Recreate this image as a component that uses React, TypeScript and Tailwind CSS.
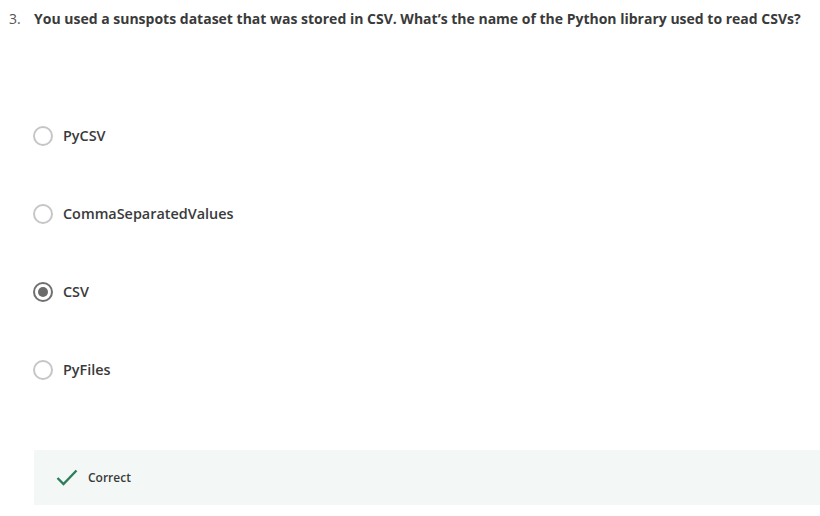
const options = [
  { label: 'PyCSV', checked: false },
  { label: 'CommaSeparatedValues', checked: false },
  { label: 'CSV', checked: true },
  { label: 'PyFiles', checked: false },
];

function Radio({ checked }: { checked: boolean }) {
  return checked ? (
    <span className="flex h-[20px] w-[20px] shrink-0 items-center justify-center rounded-full border-2 border-[#707070]">
      <span className="h-[10px] w-[10px] rounded-full bg-[#6b6b6b]" />
    </span>
  ) : (
    <span className="h-[20px] w-[20px] shrink-0 rounded-full border-2 border-[#c6c6c6]" />
  );
}

export default function App() {
  return (
    <div className="h-[516px] w-[820px] bg-white font-['Open_Sans',sans-serif] text-[#333]">
      <div className="flex pt-[9px]">
        <span className="w-[34px] pl-[9px] text-[14px] leading-[19px] text-[#555]">3.</span>
        <h2 className="text-[14px] font-bold leading-[19px] text-[#3a3a3a]">
          You used a sunspots dataset that was stored in CSV. What’s the name of the Python library used to read CSVs?
        </h2>
      </div>

      <ul className="mt-[98px] flex flex-col gap-[58px] pl-[33px]">
        {options.map((o) => (
          <li key={o.label} className="flex h-[20px] items-center gap-[10px]">
            <Radio checked={o.checked} />
            <span className="text-[14.4px] font-semibold leading-[20px] text-[#3a3a3a]">{o.label}</span>
          </li>
        ))}
      </ul>

      <div className="ml-[34px] mt-[70px] flex h-[55px] items-center bg-[#f3f8f6] pl-[22px]">
        <svg width="22" height="17" viewBox="0 0 22 17" fill="none">
          <path d="M1.5 9 L7.5 15 L20.5 1.5" stroke="#2f7d5a" strokeWidth="2.4" />
        </svg>
        <span className="ml-[10px] text-[12px] font-semibold text-[#3a3a3a]">Correct</span>
      </div>
    </div>
  );
}
